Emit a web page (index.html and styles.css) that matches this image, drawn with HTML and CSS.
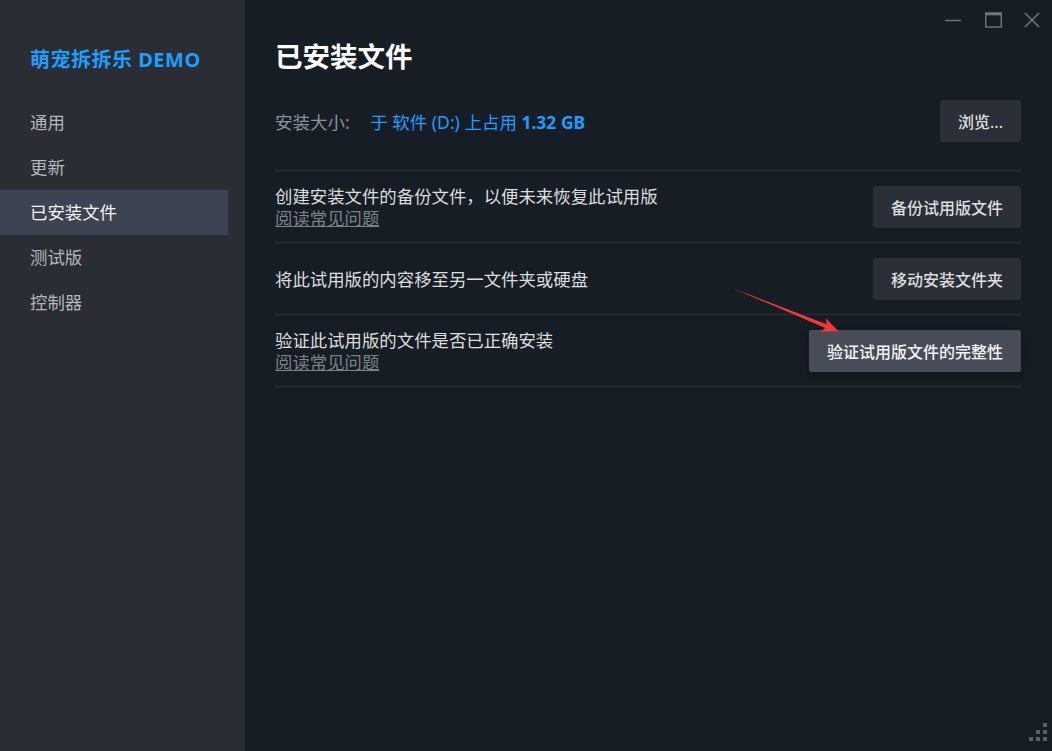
FILE: index.html
```html
<!DOCTYPE html>
<html lang="zh-CN">
<head>
    <meta charset="UTF-8">
    <title>萌宠拆拆乐 DEMO - 属性</title>
    <link rel="stylesheet" href="styles.css">
</head>
<body>
    <div class="window">
        <aside class="sidebar">
            <h1 class="game-title">萌宠拆拆乐 DEMO</h1>
            <nav class="nav">
                <div class="nav-item">通用</div>
                <div class="nav-item">更新</div>
                <div class="nav-item active">已安装文件</div>
                <div class="nav-item">测试版</div>
                <div class="nav-item">控制器</div>
            </nav>
        </aside>

        <main class="main">
            <div class="titlebar">
                <div class="win-btn">
                    <svg width="18" height="18" viewBox="0 0 18 18"><path d="M1 9.5h16" stroke="#6b787f" stroke-width="1.4"/></svg>
                </div>
                <div class="win-btn">
                    <svg width="18" height="18" viewBox="0 0 18 18"><rect x="1.7" y="2" width="15.6" height="14" fill="none" stroke="#6b787f" stroke-width="1.4"/><path d="M1 3h17" stroke="#6b787f" stroke-width="2.6"/></svg>
                </div>
                <div class="win-btn">
                    <svg width="18" height="18" viewBox="0 0 18 18"><path d="M2 2l14 14M16 2L2 16" stroke="#6b787f" stroke-width="1.5"/></svg>
                </div>
            </div>

            <div class="content">
                <h2 class="page-title">已安装文件</h2>

                <div class="size-row">
                    <div class="size-info">
                        <span class="size-label">安装大小:</span>
                        <span class="size-value">于 软件 (D:) 上占用 <b>1.32 GB</b></span>
                    </div>
                    <button class="btn">浏览...</button>
                </div>

                <div class="option-row">
                    <div class="option-text">
                        <div class="option-desc">创建安装文件的备份文件，以便未来恢复此试用版</div>
                        <a class="faq-link">阅读常见问题</a>
                    </div>
                    <button class="btn">备份试用版文件</button>
                </div>

                <div class="option-row">
                    <div class="option-text">
                        <div class="option-desc">将此试用版的内容移至另一文件夹或硬盘</div>
                    </div>
                    <button class="btn">移动安装文件夹</button>
                </div>

                <div class="option-row">
                    <div class="option-text">
                        <div class="option-desc">验证此试用版的文件是否已正确安装</div>
                        <a class="faq-link">阅读常见问题</a>
                    </div>
                    <button class="btn btn-hover">验证试用版文件的完整性</button>
                </div>
            </div>

            <svg class="resize-grip" width="24" height="24" viewBox="0 0 24 24">
                <rect x="17" y="0" width="4" height="4"/>
                <rect x="10" y="7" width="4" height="4"/>
                <rect x="17" y="7" width="4" height="4"/>
                <rect x="3" y="14" width="4" height="4"/>
                <rect x="10" y="14" width="4" height="4"/>
                <rect x="17" y="14" width="4" height="4"/>
            </svg>
        </main>

        <!-- annotation arrow drawn over the screenshot -->
        <svg class="annotation" width="1052" height="751" viewBox="0 0 1052 751">
            <polygon points="732,288 826.7,324.3 825.8,318.3 838.5,331.3 820.4,331.6 825.3,328 " fill="#f0373a"/>
        </svg>
    </div>
</body>
</html>
```

FILE: styles.css
```css
* {
    box-sizing: border-box;
}

html, body {
    margin: 0;
    height: 100%;
}

body {
    font-family: "Noto Sans", "Noto Sans CJK SC", sans-serif;
    background: #171d25;
    color: #dcdedf;
}

.window {
    display: flex;
    height: 751px;
    position: relative;
    overflow: hidden;
}

/* Sidebar */
.sidebar {
    width: 245px;
    flex-shrink: 0;
    background: #2a2d34;
    padding-top: 45px;
}

.game-title {
    margin: 0 0 25px 30px;
    font-size: 20px;
    line-height: 30px;
    font-weight: bold;
    color: #1a9fff;
    letter-spacing: 0.5px;
}

.nav {
    width: 228px;
}

.nav-item {
    height: 45px;
    line-height: 45px;
    padding-left: 30px;
    font-size: 17.4px;
    color: #b4b7bb;
}

.nav-item.active {
    background: #3d4350;
    color: #f2f3f4;
}

/* Main area */
.main {
    flex: 1;
    position: relative;
}

.titlebar {
    display: flex;
    justify-content: flex-end;
    height: 40px;
}

.win-btn {
    width: 39.5px;
    height: 40px;
    display: flex;
    align-items: center;
    justify-content: center;
}

.content {
    padding: 0 31px 0 30px;
}

.page-title {
    margin: 0;
    font-size: 27.5px;
    line-height: 34px;
    font-weight: bold;
    color: #ffffff;
}

.size-row {
    display: flex;
    justify-content: space-between;
    align-items: center;
    margin-top: 26px;
    margin-bottom: 28px;
}

.size-info {
    font-size: 17.5px;
}

.size-label {
    color: #8b929a;
    margin-right: 16px;
}

.size-value {
    color: #1a9fff;
}

.size-value b {
    font-weight: 700;
}

.btn {
    font-family: inherit;
    height: 42px;
    padding: 0 18px;
    border: none;
    border-radius: 2px;
    background: #2b2f38;
    color: #dcdedf;
    font-size: 16px;
    font-weight: 500;
    cursor: pointer;
}

.btn-hover {
    background: #474c58;
    color: #f4f5f6;
    box-shadow: 0 2px 8px rgba(0, 0, 0, 0.35);
}

.option-row {
    display: flex;
    justify-content: space-between;
    align-items: center;
    border-top: 1px solid #2c323a;
    padding: 14px 0 13px;
    min-height: 72px;
}

.option-row:last-child {
    border-bottom: 1px solid #2c323a;
    min-height: 73px;
}

.option-desc {
    font-size: 17.4px;
    line-height: 22px;
    color: #dcdedf;
}

.faq-link {
    display: block;
    width: fit-content;
    font-size: 17.4px;
    line-height: 22px;
    color: #7c8289;
    text-decoration: underline;
    cursor: pointer;
}

.resize-grip {
    position: absolute;
    right: 2px;
    bottom: 4px;
    fill: #5b6068;
}

.annotation {
    position: absolute;
    top: 0;
    left: 0;
    pointer-events: none;
}
```
